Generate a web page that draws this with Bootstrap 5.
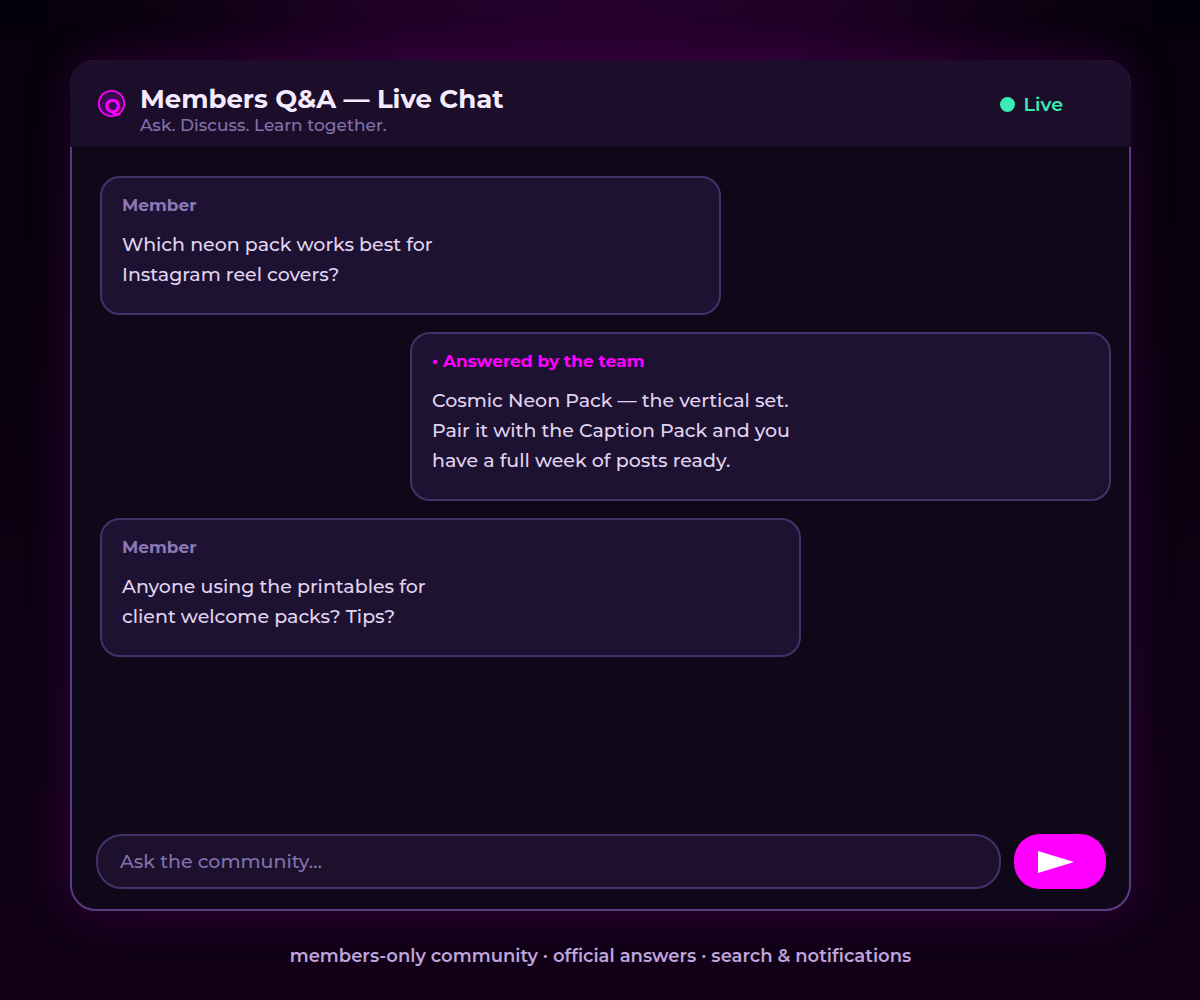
<!DOCTYPE html>
<html lang="en">
<head>
<meta charset="utf-8">
<meta name="viewport" content="width=device-width, initial-scale=1">
<title>Members Q&amp;A — Live Chat</title>
<link href="https://cdn.jsdelivr.net/npm/bootstrap@5.3.0/dist/css/bootstrap.min.css" rel="stylesheet">
<style>
  body {
    font-family: Montserrat, Inter, "Open Sans", sans-serif;
    font-size: 19px;
    font-weight: 500;
    line-height: 30px;
    color: #e0d4f0;
    background:
      radial-gradient(ellipse 560px 300px at 50% 20px, rgba(110, 0, 120, .31), rgba(110, 0, 120, .27) 35%, rgba(110, 0, 120, .08) 75%, rgba(110, 0, 120, 0)),
      linear-gradient(#05010a, #120018);
  }
  .page-shell { padding: 60px 69px 29px 70px; }
  .chat-panel {
    background: #0f0818;
    border: 2px solid #5a3c82;
    border-radius: 26px;
    box-shadow: 0 0 44px rgba(120, 0, 130, .32);
  }
  .chat-head {
    margin: -2px -2px 0;
    padding: 24px 68px 11px 28px;
    background: #1c0e2a;
    border-radius: 26px 26px 0 0;
  }
  .chat-title { font-size: 26px; line-height: 30px; color: #f5ebff; }
  .chat-sub { font-size: 17px; line-height: 22px; color: #8470ac; }
  .chat-logo { margin: 6px 15px 0 0; }
  .live-tag { margin-top: 6px; gap: 9px; font-weight: 600; color: #3cebb4; }
  .live-dot { width: 15px; height: 15px; margin-bottom: 2px; background: #3cebb4; }
  .chat-log { padding: 29px 18px 29px 28px; gap: 17px; }
  .bubble {
    max-width: 100%;
    padding: 15px 20px 23px;
    background: #1e1232;
    border: 2px solid #463069;
    border-radius: 20px;
  }
  .bubble-sm { width: 621px; }
  .bubble-lg { width: 701px; }
  .bubble-who { margin-bottom: 13px; font-size: 17px; line-height: 24px; color: #8c78b4; }
  .bubble-who.team { color: #ff00ff; }
  .ask-bar { padding: 0 23px 20px 24px; gap: 13px; }
  .ask-input, .ask-input:focus {
    height: 55px;
    padding: 10px 22px;
    font-size: 19px;
    font-weight: 500;
    line-height: 30px;
    color: #e0d4f0;
    background: #1c102d;
    border: 2px solid #463069;
    border-radius: 26px;
  }
  .ask-input::placeholder { color: #8470ac; opacity: 1; }
  .ask-send, .ask-send:hover {
    width: 92px;
    height: 55px;
    padding: 0 0 0 24px;
    text-align: left;
    background: #ff00ff;
    border-radius: 26px;
  }
  .page-note { margin-top: 30px; font-size: 18px; color: #bea5dc; }
</style>
<script src="https://cdn.jsdelivr.net/npm/bootstrap@5.3.0/dist/js/bootstrap.bundle.min.js"></script>
</head>
<body class="min-vh-100 d-flex flex-column">
<div class="page-shell flex-grow-1 d-flex flex-column">
  <main class="chat-panel flex-grow-1 d-flex flex-column">
    <header class="chat-head d-flex align-items-start">
      <svg class="chat-logo flex-shrink-0" width="27" height="27" viewBox="0 0 27 27" overflow="visible" aria-hidden="true">
        <circle cx="13.5" cy="13.5" r="12.7" fill="#3c0a50" stroke="#ff00ff" stroke-width="1.8"/>
        <text x="14.5" y="23" text-anchor="middle" font-size="19" font-weight="700" fill="#ff00ff">Q</text>
      </svg>
      <div class="flex-grow-1">
        <h1 class="chat-title fw-bold mb-0">Members Q&amp;A — Live Chat</h1>
        <p class="chat-sub mb-0">Ask. Discuss. Learn together.</p>
      </div>
      <div class="live-tag d-flex align-items-center">
        <span class="live-dot rounded-circle"></span>
        <span>Live</span>
      </div>
    </header>

    <section class="chat-log flex-grow-1 d-flex flex-column" aria-label="Messages">
      <article class="bubble bubble-sm align-self-start">
        <div class="bubble-who fw-bold">Member</div>
        <p class="mb-0">Which neon pack works best for<br>Instagram reel covers?</p>
      </article>
      <article class="bubble bubble-lg align-self-end">
        <div class="bubble-who team fw-bold">• Answered by the team</div>
        <p class="mb-0">Cosmic Neon Pack — the vertical set.<br>Pair it with the Caption Pack and you<br>have a full week of posts ready.</p>
      </article>
      <article class="bubble bubble-lg align-self-start">
        <div class="bubble-who fw-bold">Member</div>
        <p class="mb-0">Anyone using the printables for<br>client welcome packs? Tips?</p>
      </article>
    </section>

    <form class="ask-bar d-flex align-items-center">
      <input class="form-control ask-input" id="ask" type="text" placeholder="Ask the community…" aria-label="Ask the community">
      <button class="btn ask-send border-0 flex-shrink-0 d-flex align-items-center" type="button" aria-label="Send">
        <svg width="36" height="24" viewBox="0 0 36 24" aria-hidden="true"><path d="M0 1L36 12L0 23Z" fill="#fff"/></svg>
      </button>
    </form>
  </main>
  <footer class="page-note text-center fw-semibold">members-only community · official answers · search &amp; notifications</footer>
</div>
</body>
</html>
